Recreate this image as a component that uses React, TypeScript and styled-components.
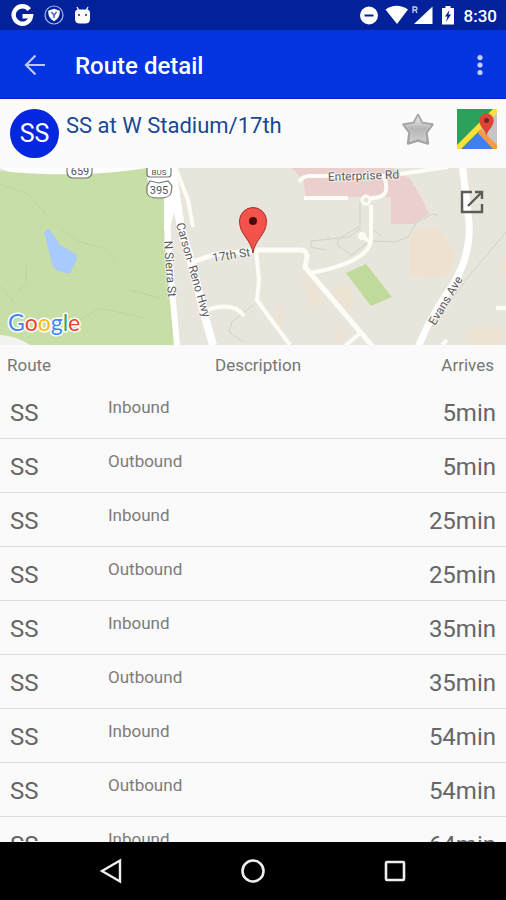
import React from "react";
import styled, { createGlobalStyle } from "styled-components";

const GlobalStyle = createGlobalStyle`
  *, *::before, *::after { box-sizing: border-box; }
  body { margin: 0; font-family: Roboto, "Liberation Sans", sans-serif; background: #fafafa; }
  svg { display: block; }
`;

const Screen = styled.div`
  display: flex;
  flex-direction: column;
  height: 100vh;
  overflow: hidden;
`;

const StatusBar = styled.div`
  flex: none;
  display: flex;
  align-items: center;
  justify-content: space-between;
  height: 30px;
  padding: 0 9px 0 11px;
  background: #02219b;
  color: #fff;
`;

const StatusGroup = styled.div<{ $gap: number }>`
  display: flex;
  align-items: center;
  gap: ${(p) => p.$gap}px;
`;

const Clock = styled.time`
  font-size: 17px;
  font-weight: 500;
  line-height: 24px;
  padding-top: 2px;
`;

const AppBar = styled.header`
  flex: none;
  display: flex;
  align-items: center;
  height: 69px;
  padding: 2px 13px 0 20px;
  border-bottom: 1px solid #0a1bc4;
  background: #0433e0;
  color: #fff;
`;

const AppTitle = styled.h1`
  flex: 1;
  margin: 0 0 0 25px;
  padding-top: 2px;
  font-size: 24px;
  font-weight: 500;
  line-height: 32px;
`;

const IconButton = styled.button<{ $width: number }>`
  flex: none;
  display: flex;
  align-items: center;
  justify-content: center;
  width: ${(p) => p.$width}px;
  height: 40px;
  padding: 0;
  border: 0;
  background: none;
  color: inherit;
  cursor: pointer;
`;

const StopHeader = styled.section`
  flex: none;
  display: flex;
  align-items: flex-start;
  height: 69px;
  padding: 10px 9px 0 10px;
  background: #fbfbfb;
`;

const RouteBadge = styled.span`
  flex: none;
  width: 49px;
  height: 49px;
  border-radius: 50%;
  background: #0527df;
  color: #fff;
  font-size: 25px;
  line-height: 50px;
  text-align: center;
`;

const StopName = styled.h2`
  flex: 1;
  margin: 0 0 0 7px;
  color: #174894;
  font-size: 22px;
  font-weight: 400;
  line-height: 34px;
`;

const StopActions = styled.div`
  display: flex;
  gap: 19px;
`;

const MapPanel = styled.section`
  flex: none;
  position: relative;
  height: 177px;
  overflow: hidden;
  background: #e8e6dc;
`;

const OpenMap = styled(IconButton)`
  position: absolute;
  top: 14px;
  right: 14px;
`;

const Arrivals = styled.main`
  flex: 1;
  min-height: 0;
  overflow: hidden;
  background: #fafafa;
`;

const ArrivalTable = styled.table`
  width: 100%;
  table-layout: fixed;
  border-collapse: separate;
  border-spacing: 0;
  color: #666;
`;

const HeadCell = styled.th<{ $align: "left" | "center" | "right"; $width?: number }>`
  width: ${(p) => (p.$width ? `${p.$width}px` : "auto")};
  height: 40px;
  padding: 0 12px 0 ${(p) => (p.$align === "left" ? 7 : 12)}px;
  font-size: 17px;
  font-weight: 400;
  text-align: ${(p) => p.$align};
  color: #767676;
`;

const Cell = styled.td<{ $end?: boolean }>`
  height: 54px;
  padding: 2px 10px 0;
  border-bottom: 1px solid #dcdcdc;
  font-size: 24px;
  line-height: 32px;
  text-align: ${(p) => (p.$end ? "right" : "left")};
`;

const DirectionCell = styled(Cell)`
  padding: 12px 0 0;
  font-size: 17px;
  line-height: 20px;
  vertical-align: top;
  color: #7c7c7c;
`;

const NavBar = styled.nav`
  flex: none;
  display: grid;
  grid-template-columns: repeat(3, 142px);
  justify-content: center;
  align-items: center;
  height: 58px;
  background: #000;
  color: #eee;
`;

const NavButton = styled(IconButton)`
  width: 100%;
`;

const GoogleIcon = () => (
  <svg width="23" height="23" viewBox="0 0 23 23" fill="none" stroke="#fff" strokeWidth="4.4">
    <path d="M18.2 5.6A8.7 8.7 0 1 0 20 12.2H11.5" />
  </svg>
);

const ShieldIcon = () => (
  <svg width="20" height="20" viewBox="0 0 20 20">
    <circle cx="10" cy="10" r="9" fill="none" stroke="#a9b9ec" strokeWidth="1.2" />
    <path d="M10 3.8 15.8 5.8c.1 5-1.400 8-5.800 10.400C5.600 13.800 4.100 10.800 4.200 5.800Z" fill="#fff" />
    <path d="m7.500 7 2.500 3.200L12.500 7M10 10v3" fill="none" stroke="#4966ba" strokeWidth="1.500" />
  </svg>
);

const AndroidIcon = () => (
  <svg width="17" height="19" viewBox="0 0 17 19">
    <path d="m3 1 2 4M14 1l-2 4" stroke="#fff" strokeWidth="1.300" />
    <path d="M1 7q0-3.500 3.500-3.500h8Q16 3.500 16 7v6q0 4.500-5 4.500H6Q1 17.500 1 13Z" fill="#fff" />
    <circle cx="5" cy="9" r="1" fill="#02219b" />
    <circle cx="12" cy="9" r="1" fill="#02219b" />
  </svg>
);

const StatusIcons = () => (
  <svg width="98" height="22" viewBox="0 0 98 22" fill="#fff">
    <circle cx="10" cy="11.500" r="9" />
    <path d="M5.500 11.500h9" stroke="#02219b" strokeWidth="2" />
    <path d="M26.500 5.500Q37.500-2 49 5.500L38 20Z" />
    <path d="M73.500 2.500V20H55Z" />
    <path d="M54 9V3h2.500q1.500 0 1.500 1.500T56.500 6H54m2.500 0L58 9" fill="none" stroke="#c7d0f1" strokeWidth="1.300" />
    <path d="M83 4h3.500V2h5v2H95v16.500H83Z" />
    <path d="m90.500 6-4.500 6.500h2.500l-1.500 5.500 5-7.500H89.500Z" fill="#02219b" />
  </svg>
);

const BackIcon = () => (
  <svg width="22" height="22" viewBox="0 0 22 22" fill="none" stroke="#b8c8fa" strokeWidth="2.200">
    <path d="M21 11H2.500M11.500 1.500 2 11l9.500 9.500" />
  </svg>
);

const MoreIcon = () => (
  <svg width="6" height="22" viewBox="0 0 6 22" fill="#c2cffb">
    <circle cx="3" cy="3.500" r="2.600" />
    <circle cx="3" cy="11" r="2.600" />
    <circle cx="3" cy="18.500" r="2.600" />
  </svg>
);

const StarIcon = () => (
  <svg width="36" height="36" viewBox="0 0 36 36">
    <defs>
      <linearGradient id="starFill" x1="0" y1="0" x2="0" y2="1">
        <stop offset="0" stopColor="#eeeeee" />
        <stop offset="0.500" stopColor="#b4b4b4" />
        <stop offset="1" stopColor="#cfcfcf" />
      </linearGradient>
    </defs>
    <path
      d="M18 4 22.300 12 32.500 13.500 26.500 21.500 28 32.500 18 29.500 8 32.500 9.500 21.500 3.500 13.500 13.700 12Z"
      fill="#a4a4a4" stroke="#a4a4a4" strokeWidth="2.400" strokeLinejoin="round"
    />
    <path
      d="M18 5.500 21.500 13 30.500 14.400 24.700 21 26 30.500 18 27.500 10 30.500 11.300 21 5.500 14.400 14.500 13Z"
      fill="url(#starFill)" stroke="#cfcfcf" strokeWidth="1" strokeLinejoin="round"
    />
  </svg>
);

const MapsIcon = () => (
  <svg width="40" height="40" viewBox="0 0 40 40">
    <path d="M0 0h40v40H0Z" fill="#2ba25b" />
    <path d="M22 21 40 3v37Z" fill="#c6c6c8" />
    <path d="M5 40 21 24l15 16Z" fill="#4080ee" />
    <path d="M0 40V36L36 0h4v4L4 40Z" fill="#fde03a" />
    <path d="M20 23 24 20 40 36v4h-4Z" fill="#f99b42" />
    <path d="M29.500 27c-.8-6-7.200-9-7.200-15.500a7.200 7.200 0 0 1 14.400 0C36.700 18 30.300 21 29.500 27Z" fill="#dc4435" />
    <circle cx="29.500" cy="11.500" r="2.500" fill="#77221b" />
  </svg>
);

const OpenIcon = () => (
  <svg width="24" height="24" viewBox="0 0 24 24" fill="none" stroke="#5c5b57" strokeWidth="2.400">
    <path d="M12 2H2v20h20v-8M15 2h7v7M22 2 8 16" />
  </svg>
);

const StreetMap = () => (
  <svg
    width="100%" height="177" viewBox="0 168 506 177" preserveAspectRatio="xMidYMid slice"
    role="img" aria-label="Map of W Stadium and 17th St"
    fontFamily="Roboto, sans-serif" fontSize="12"
  >
    <path d="M0 168h506v177H0Z" fill="#e8e6dc" />
    <g fill="#eee1d0">
      <path d="M419 228q14-4 23 5l13 20-5 20-20 6-20-5V238Z" />
      <path d="m337 282 14 5 4 18-14 5-8-12ZM301 276l10 4 13 21-4 9-10-6ZM272 305l9 6 5 18-8-4ZM336 325l10 6-3 13-8-3ZM470 328h32v17h-37ZM503 258l3-2v20l-5-6Z" opacity="0.700" />
    </g>
    <path d="M292 168h100l18 11 10 16 9 19-16 10h-22v-27h-85l-3-17Z" fill="#ebcfcd" />
    <path d="M0 168h173l6 22 4 32-4 6-5-15-5 17h-7Z" fill="#fff" />
    <path d="M0 171q80 8 147-3v8q2 18 17 20v45l6 54 5 50H30Q15 337 0 335Z" fill="#c7dea6" />
    <path d="M0 335q17 1 30 10H0Z" fill="#f3f3ee" />
    <path d="M44 232q4-5 7-1l9 14 16 9 1 6-7 13q-10 1-17-6Z" fill="#a9cafc" />
    <g fill="none" stroke="#bad29b" strokeWidth="0.800">
      <path d="m0 184 28 10 18 20M60 228l18 13 25 7 14 14M26 265v20l-8 5M80 320l20-12 44 10M130 290l30 8M0 286l14 16" />
    </g>
    <g fill="none" stroke="#d3d0c7" strokeWidth="1">
      <path d="M360 202v24l-22 13v7l14 9 15-12M361 228l-12 9-38 4v6l14 3M328 236v4M373 241l22 1 13-5 8-14 16-9 5 1M371 228l10 8M506 232 470 275 436 320 420 345M253 305l-9 7-12 10-3 10 15 10" />
    </g>
    <g fill="none" stroke="#fdfcf7" strokeWidth="4" strokeLinejoin="round">
      <path d="m167 200 1 40 4 50 5 55" stroke="#fff" strokeWidth="6" />
      <path d="m172 168 9 60 8 26 8 31 8 32 8 28" stroke="#fff" strokeWidth="8" />
      <path d="m174 164 14 36 5 27" strokeWidth="4" />
      <path d="m193 262 20-7 44-5h43q7 0 7 7l-2 10 6 7 62 73" strokeWidth="5" />
      <path d="m256 250 3 30-2 20 10 14 23 31M207 310q27-9 37 6M359 334l-14 12M311 273q63-12 60-37v-31" />
      <path d="M299 182q4-6 10-6h75q5 15-1 19-3 3-12 3M400 174l48-7M304 198h44" />
      <circle cx="366" cy="200" r="4" strokeWidth="3" />
      <path d="m362 236 8 6" />
      <path d="m462 162 7 60q2 32-15 61-23 33-36 64" stroke="#fff" strokeWidth="7" />
      <path d="M496 308h10M442 345l5-5" />
    </g>
    <circle cx="362" cy="236" r="4" fill="#fdfcf7" />
    <path d="m346 273 20-9 26 33-21 9Z" fill="#bfda9b" />

    <g fill="#fff" stroke="#777" strokeWidth="1.200">
      <rect x="67" y="160" width="25" height="18" rx="6" />
      <rect x="147" y="160" width="24" height="17" rx="3" />
      <path d="m150 181 9 2 9-2 4 5-1 7q-1 5-12 5t-12-5v-7Z" />
    </g>
    <g fill="#555" fontSize="11" textAnchor="middle">
      <text x="80" y="175">659</text>
      <text x="159" y="175" fontSize="8">BUS</text>
      <text x="159" y="194">395</text>
    </g>

    <g fill="#5c5c5c" stroke="#fff" strokeWidth="2" strokeOpacity="0.600" paintOrder="stroke">
      <text x="328" y="181" transform="rotate(-2 328 181)">Enterprise Rd</text>
      <text x="213" y="262" transform="rotate(-9 213 262)">17th St</text>
      <text x="164" y="241" transform="rotate(86 164 241)">N Sierra St</text>
      <text x="176" y="224" transform="rotate(74 176 224)">Carson- Reno Hwy</text>
      <text x="435" y="326" transform="rotate(-59 435 326)">Evans Ave</text>
    </g>

    <path d="M253 253c-2-14-13.500-18-13.500-32a13.500 13.500 0 0 1 27 0c0 14-11.500 18-13.500 32Z" fill="#f4534b" stroke="#a92f2a" strokeWidth="1" />
    <circle cx="253" cy="221" r="4" fill="#480d0a" />

    <text
      x="8" y="331" fontFamily="Lato, sans-serif" fontSize="23" fontWeight="400"
      stroke="#fff" strokeWidth="3" strokeLinejoin="round" paintOrder="stroke"
    >
      <tspan fill="#4285f4">G</tspan>
      <tspan fill="#ea4335">o</tspan>
      <tspan fill="#fbbc05">o</tspan>
      <tspan fill="#4285f4">g</tspan>
      <tspan fill="#34a853">l</tspan>
      <tspan fill="#ea4335">e</tspan>
    </text>
  </svg>
);

const arrivals = ["5min", "25min", "35min", "54min", "64min"].flatMap((time) => [
  { route: "SS", direction: "Inbound", time },
  { route: "SS", direction: "Outbound", time },
]);

export default function App() {
  return (
    <Screen>
      <GlobalStyle />
      <StatusBar>
        <StatusGroup $gap={10}>
          <GoogleIcon />
          <ShieldIcon />
          <AndroidIcon />
        </StatusGroup>
        <StatusGroup $gap={7}>
          <StatusIcons />
          <Clock>8:30</Clock>
        </StatusGroup>
      </StatusBar>

      <AppBar>
        <IconButton $width={30} aria-label="Back"><BackIcon /></IconButton>
        <AppTitle>Route detail</AppTitle>
        <IconButton $width={26} aria-label="More options"><MoreIcon /></IconButton>
      </AppBar>

      <StopHeader>
        <RouteBadge>SS</RouteBadge>
        <StopName>SS at W Stadium/17th</StopName>
        <StopActions>
          <IconButton $width={40} aria-label="Add to favorites"><StarIcon /></IconButton>
          <IconButton $width={40} aria-label="Open in maps"><MapsIcon /></IconButton>
        </StopActions>
      </StopHeader>

      <MapPanel>
        <StreetMap />
        <OpenMap $width={40} aria-label="Expand map"><OpenIcon /></OpenMap>
      </MapPanel>

      <Arrivals>
        <ArrivalTable>
          <thead>
            <tr>
              <HeadCell $align="left" $width={108}>Route</HeadCell>
              <HeadCell $align="center">Description</HeadCell>
              <HeadCell $align="right" $width={98}>Arrives</HeadCell>
            </tr>
          </thead>
          <tbody>
            {arrivals.map((item, index) => (
              <tr key={index}>
                <Cell>{item.route}</Cell>
                <DirectionCell>{item.direction}</DirectionCell>
                <Cell $end>{item.time}</Cell>
              </tr>
            ))}
          </tbody>
        </ArrivalTable>
      </Arrivals>

      <NavBar>
        <NavButton $width={142} aria-label="Back">
          <svg width="24" height="26" viewBox="0 0 24 26" fill="none" stroke="currentColor" strokeWidth="2.400">
            <path d="M21 2.500v21L3 13Z" />
          </svg>
        </NavButton>
        <NavButton $width={142} aria-label="Home">
          <svg width="26" height="26" viewBox="0 0 26 26" fill="none" stroke="currentColor" strokeWidth="2.600">
            <circle cx="13" cy="13" r="10.500" />
          </svg>
        </NavButton>
        <NavButton $width={142} aria-label="Recent apps">
          <svg width="22" height="22" viewBox="0 0 22 22" fill="none" stroke="currentColor" strokeWidth="2.600">
            <rect x="2" y="2" width="18" height="18" rx="1" />
          </svg>
        </NavButton>
      </NavBar>
    </Screen>
  );
}
